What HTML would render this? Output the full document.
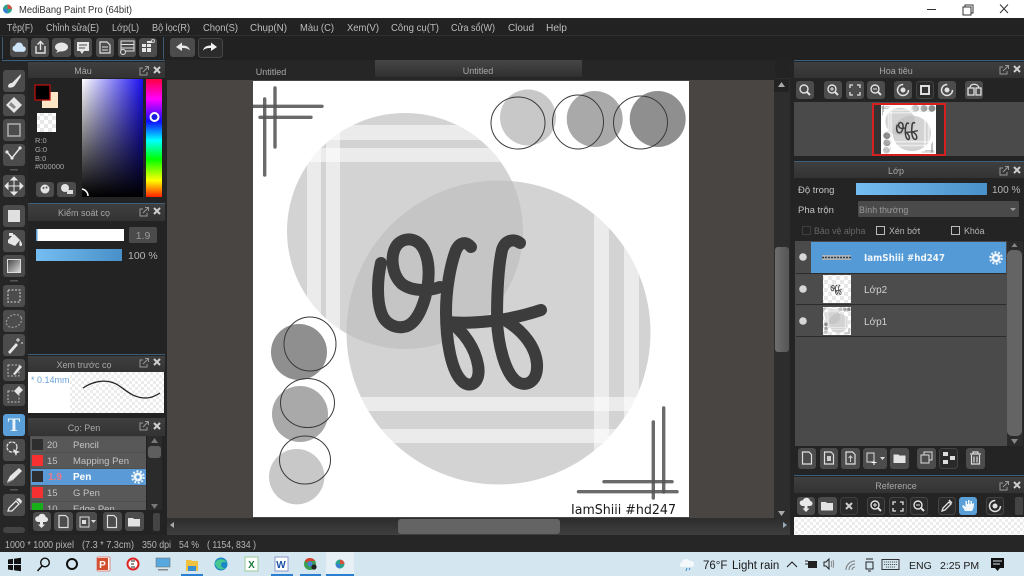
<!DOCTYPE html>
<html><head><meta charset="utf-8"><title>MediBang Paint Pro</title>
<style>
html,body{margin:0;padding:0;width:1024px;height:576px;overflow:hidden;background:#222}
svg{display:block}
text{font-family:"Liberation Sans","DejaVu Sans",sans-serif}
.m{font-size:10.5px;fill:#bdbdbd}
.t{font-size:9px;fill:#a8a8a8;text-anchor:middle}
.l{font-size:9.5px;fill:#c4c4c4}
.b{fill:#4c4c4c}
</style></head><body>
<svg width="1024" height="576" viewBox="0 0 1024 576" xmlns="http://www.w3.org/2000/svg">
<defs>
<linearGradient id="tab" x1="0" y1="0" x2="0" y2="1"><stop offset="0" stop-color="#464646"/><stop offset="1" stop-color="#303030"/></linearGradient>
<linearGradient id="ttl" x1="0" y1="0" x2="0" y2="1"><stop offset="0" stop-color="#3f3f3f"/><stop offset="1" stop-color="#333"/></linearGradient>
<linearGradient id="blue" x1="0" y1="0" x2="1" y2="0"><stop offset="0" stop-color="#74bdf2"/><stop offset="1" stop-color="#4a90c8"/></linearGradient>
<linearGradient id="hue" x1="0" y1="0" x2="0" y2="1"><stop offset="0" stop-color="#ff0040"/><stop offset=".17" stop-color="#ff00ff"/><stop offset=".36" stop-color="#1010ff"/><stop offset=".52" stop-color="#00ffff"/><stop offset=".68" stop-color="#00ff00"/><stop offset=".86" stop-color="#ffff00"/><stop offset="1" stop-color="#ff2000"/></linearGradient>
<linearGradient id="sv1" x1="0" y1="0" x2="1" y2="0"><stop offset="0" stop-color="#fff"/><stop offset="1" stop-color="#1a10f0"/></linearGradient>
<linearGradient id="sv2" x1="0" y1="0" x2="0" y2="1"><stop offset="0" stop-color="#000" stop-opacity="0"/><stop offset="1" stop-color="#000"/></linearGradient>
<linearGradient id="sbv" x1="0" y1="0" x2="1" y2="0"><stop offset="0" stop-color="#6e6e6e"/><stop offset="1" stop-color="#555"/></linearGradient>
<linearGradient id="track" x1="0" y1="0" x2="0" y2="1"><stop offset="0" stop-color="#2c2c2c"/><stop offset="1" stop-color="#403f3f"/></linearGradient>
<linearGradient id="grad" x1="0" y1="0" x2="1" y2="1"><stop offset="0" stop-color="#444"/><stop offset="1" stop-color="#ddd"/></linearGradient>
<pattern id="chk" width="8" height="8" patternUnits="userSpaceOnUse"><rect width="8" height="8" fill="#fff"/><rect width="4" height="4" fill="#e8e8e8"/><rect x="4" y="4" width="4" height="4" fill="#e8e8e8"/></pattern>
<pattern id="chk2" width="6" height="6" patternUnits="userSpaceOnUse"><rect width="6" height="6" fill="#fff"/><rect width="3" height="3" fill="#ececec"/><rect x="3" y="3" width="3" height="3" fill="#ececec"/></pattern>
<clipPath id="cv"><rect x="253" y="81" width="436" height="436"/></clipPath>
<clipPath id="c1"><circle cx="405" cy="231" r="118"/></clipPath>
<clipPath id="c2"><circle cx="498.5" cy="332.5" r="152"/></clipPath>
<g id="pop"><path d="M3 2H0V9H7V6" fill="none" stroke="#999" stroke-width="1"/><path d="M3 6L8 1M5 0.5H8.5V4" fill="none" stroke="#999"/></g>
<g id="x"><path d="M0 0L6 6M6 0L0 6" stroke="#cfcfcf" stroke-width="2"/></g>
<g id="gear"><circle r="4.5" fill="#eef5fb"/><circle r="5.8" fill="none" stroke="#eef5fb" stroke-width="2" stroke-dasharray="2 1.65"/><circle r="1.7" fill="#5a9dd6"/></g>
<g id="zi"><circle cx="-1" cy="-1" r="4" fill="none" stroke="#e2e2e2" stroke-width="1.4"/><path d="M2 2L5 5" stroke="#e2e2e2" stroke-width="2"/></g>
<g id="zp"><use href="#zi"/><path d="M-3-1H1M-1-3V1" stroke="#e2e2e2"/></g>
<g id="zm"><use href="#zi"/><path d="M-3-1H1" stroke="#e2e2e2"/></g>
<g id="page"><path d="M-4.5-6H2L4.500-3.500V6H-4.500Z" fill="none" stroke="#dedede" stroke-width="1.2"/></g>
<g id="fold"><path d="M-6-4H-1L0-3H6V4.500H-6Z" fill="#e2e2e2"/></g>
<g id="cloud"><g fill="#e8e8e8"><circle cx="-3.500" cy="-1" r="2.800"/><circle cx="0.500" cy="-2.500" r="3.800"/><circle cx="4" cy="-0.500" r="2.500"/><rect x="-4" y="-1" width="8" height="3"/><path d="M-1.500 2H1.500V4.500H3.500L0 8L-3.500 4.500H-1.500Z"/></g></g>
<g id="rot"><circle r="5.500" fill="none" stroke="#e2e2e2" stroke-width="1.500" stroke-dasharray="26 9"/><circle r="2.500" fill="#e2e2e2"/></g>
<g id="letters" fill="none" stroke="#3c3c3c" stroke-width="12" stroke-linecap="round" stroke-linejoin="round">
  <path d="M381 263C377 280 377 300 381 312C385 325 396 328 403 327C414 326 421 312 425 298C430 280 430 262 424 250C418 238 405 236 397 245C390 254 391 274 402 284C413 292 430 291 440 287"/>
  <path d="M471 247C466 241 460 242 456 250C450 266 446 290 446 312C446 340 451 372 463 382C472 389 481 381 478 365C475 348 464 332 450 322"/>
  <path d="M520 243C514 238 505 240 502 250C498 268 497 296 497 320C498 345 505 372 516 381C526 388 538 382 537 364C536 348 524 332 508 322"/>
  <path d="M447 322C470 324 505 322 541 310"/>
</g>
<g id="art">
 <circle cx="405" cy="231" r="118" fill="#d3d3d3"/>
 <g clip-path="url(#c1)" fill="#fff" fill-opacity=".55">
  <rect x="280" y="125" width="250" height="15"/><rect x="280" y="148" width="250" height="14"/>
  <rect x="307" y="100" width="14" height="260"/><rect x="326" y="100" width="14" height="260"/>
 </g>
 <circle cx="498.500" cy="332.500" r="152" fill="#d3d3d3"/>
 <g clip-path="url(#c2)">
  <circle cx="405" cy="231" r="118" fill="#c5c5c5"/>
  <g fill="#fff" fill-opacity=".55">
   <rect x="340" y="397" width="320" height="14"/><rect x="340" y="429" width="320" height="14"/>
   <rect x="594" y="170" width="15" height="320"/><rect x="624" y="170" width="15" height="320"/>
  </g>
 </g>
 <circle cx="528" cy="117.500" r="28" fill="#c8c8c8"/>
 <circle cx="594.700" cy="119" r="28" fill="#a9a9a9"/>
 <circle cx="657.700" cy="119" r="28" fill="#8f8f8f"/>
 <circle cx="299" cy="352" r="28" fill="#8f8f8f"/>
 <circle cx="300" cy="414" r="28" fill="#a9a9a9"/>
 <circle cx="296.700" cy="476.700" r="27.700" fill="#c8c8c8"/>
 <g fill="none" stroke="#3a3a3a" stroke-width="1">
  <ellipse cx="518" cy="123" rx="27" ry="26"/><ellipse cx="578" cy="122" rx="25.500" ry="27"/><ellipse cx="640.500" cy="122.500" rx="27" ry="26.500"/>
  <ellipse cx="310" cy="344" rx="26" ry="27"/><ellipse cx="307.500" cy="403" rx="27" ry="24.500"/><ellipse cx="305" cy="460" rx="25.500" ry="24"/>
 </g>
 <g stroke="#555" stroke-opacity=".88" stroke-width="3.400" stroke-linecap="round" fill="none">
  <path d="M250 106.300H322"/><path d="M260 117.300H311"/><path d="M275 88V147"/><path d="M264.700 99V175"/>
  <path d="M663.700 408V492"/><path d="M653.300 422V498"/><path d="M604 481.700H672"/><path d="M578.500 491.700H677"/>
 </g>
</g>
</defs>

<rect width="1024" height="576" fill="#232323"/>
<!-- title bar -->
<rect width="1024" height="18" fill="#fff"/>
<circle cx="7.500" cy="9" r="4.500" fill="#2aa589"/><path d="M7.500 4.500A4.500 4.500 0 0 1 12 9H7.500Z" fill="#d9503f"/><path d="M3 9A4.500 4.500 0 0 0 7.500 13.500V9Z" fill="#3a7bd5"/>
<text x="19" y="13" textLength="113" lengthAdjust="spacingAndGlyphs" style="font-size:10.500px;fill:#333">MediBang Paint Pro (64bit)</text>
<path d="M927 9.500H936" stroke="#333"/>
<path d="M963 7h8v8h-8zM965 7V5h8v8h-2" fill="none" stroke="#333"/>
<path d="M1000 4.500L1008 13M1008 4.500L1000 13" stroke="#333" stroke-width="1"/>

<!-- menu -->
<rect y="18" width="1024" height="18" fill="#222"/>
<rect y="35" width="1024" height="1" fill="#2e2e2e"/>
<text class="m" x="7" y="31" textLength="26" lengthAdjust="spacingAndGlyphs">Tệp(F)</text>
<text class="m" x="46" y="31" textLength="53" lengthAdjust="spacingAndGlyphs">Chỉnh sửa(E)</text>
<text class="m" x="112" y="31" textLength="27" lengthAdjust="spacingAndGlyphs">Lớp(L)</text>
<text class="m" x="152" y="31" textLength="38" lengthAdjust="spacingAndGlyphs">Bộ lọc(R)</text>
<text class="m" x="203" y="31" textLength="35" lengthAdjust="spacingAndGlyphs">Chọn(S)</text>
<text class="m" x="250" y="31" textLength="37" lengthAdjust="spacingAndGlyphs">Chụp(N)</text>
<text class="m" x="300" y="31" textLength="34" lengthAdjust="spacingAndGlyphs">Màu (C)</text>
<text class="m" x="347" y="31" textLength="32" lengthAdjust="spacingAndGlyphs">Xem(V)</text>
<text class="m" x="391" y="31" textLength="48" lengthAdjust="spacingAndGlyphs">Công cụ(T)</text>
<text class="m" x="451" y="31" textLength="44" lengthAdjust="spacingAndGlyphs">Cửa sổ(W)</text>
<text class="m" x="508" y="31" textLength="26" lengthAdjust="spacingAndGlyphs">Cloud</text>
<text class="m" x="546" y="31" textLength="21" lengthAdjust="spacingAndGlyphs">Help</text>

<!-- top toolbar -->
<rect y="36" width="1024" height="24" fill="#212121"/>
<rect x="2" y="37" width="1" height="22" fill="#3d5a72"/><rect x="163" y="37" width="1" height="22" fill="#3d5a72"/>
<rect x="10" y="38" width="18" height="19" rx="3" fill="#4c4c4c"/>
<g fill="#cfe6fa"><circle cx="15.500" cy="48.500" r="3"/><circle cx="19" cy="46.500" r="4"/><circle cx="23" cy="49" r="2.800"/><rect x="15" y="48" width="8" height="3.800"/></g>
<rect x="31" y="38" width="18" height="19" rx="3" class="b"/><path d="M36 46v7h9v-7M40.500 50V42M37.500 44.500L40.500 41.500L43.500 44.500" fill="none" stroke="#e2e2e2" stroke-width="1.400"/>
<rect x="52" y="38" width="19" height="19" rx="3" class="b"/><ellipse cx="61.500" cy="47" rx="6.500" ry="4.500" fill="#e6e6e6"/><path d="M58 50l-2 3 5-2z" fill="#e6e6e6"/>
<rect x="74" y="38" width="18" height="19" rx="3" class="b"/><path d="M77 42h12v9h-5l-2 3-2-3h-3z" fill="#e6e6e6"/><path d="M79 45h8M79 48h6" stroke="#4c4c4c"/>
<rect x="96" y="38" width="18" height="19" rx="3" class="b"/><path d="M100 42h7l3 3v8h-10z" fill="none" stroke="#e2e2e2" stroke-width="1.200"/><path d="M102 47h6M102 50h6" stroke="#e2e2e2"/>
<rect x="118" y="38" width="18" height="19" rx="3" class="b"/><path d="M121 41h13v10h-13zM121 44.500h13M121 48h13" fill="none" stroke="#e2e2e2"/><circle cx="123" cy="52" r="2.500" fill="#4c4c4c" stroke="#e2e2e2"/>
<rect x="139" y="38" width="18" height="19" rx="3" class="b"/><path d="M142 44h4v3h-4zM147 44h4v3h-4zM142 48h4v4h-4zM147 48h4v4h-4z" fill="#e6e6e6"/><rect x="147" y="41" width="5" height="2" fill="#e6e6e6"/><circle cx="153" cy="41" r="1.500" fill="none" stroke="#ccc"/>
<rect x="170" y="38" width="25" height="19" rx="3" class="b"/><path d="M176 47l6-4.500v3c4 0 7 1 8 5-2-2-4-2.500-8-2.500v3z" fill="#e8e8e8"/>
<rect x="198.500" y="38.500" width="24" height="19" rx="3" fill="#2b2b2b" stroke="#464646"/><path d="M217 47l-6-4.500v3c-4 0-7 1-8 5 2-2 4-2.500 8-2.500v3z" fill="#f0f0f0"/>

<!-- tabs -->
<rect x="166" y="60" width="609" height="20" fill="#262626"/>
<rect x="375" y="60" width="207" height="17" fill="url(#tab)"/>
<text class="t" x="271" y="75">Untitled</text>
<text class="t" x="478" y="74">Untitled</text>

<!-- canvas -->
<rect x="167" y="80" width="607" height="438" fill="#484543"/>
<rect x="253" y="81" width="436" height="436" fill="#fff"/>
<g clip-path="url(#cv)">
 <use href="#art"/>
 <use href="#letters"/>
 <text x="571" y="514" style="font-family:'DejaVu Sans',sans-serif;font-size:13.500px;fill:#1a1a1a" textLength="105" lengthAdjust="spacingAndGlyphs">IamShiii #hd247</text>
</g>

<!-- canvas scrollbars -->
<rect x="774" y="78" width="16" height="441" fill="#2e2d2d"/>
<rect x="775" y="247" width="14" height="105" rx="3" fill="url(#sbv)"/>
<rect x="774" y="79" width="15" height="13" fill="#232323"/><path d="M781.500 82l3.500 5h-7z" fill="#aaa"/>
<path d="M778 511h7l-3.500 5z" fill="#aaa"/>
<rect x="167" y="518" width="623" height="17" fill="url(#track)"/>
<rect x="398" y="519" width="162" height="15" rx="3" fill="#646464"/>
<path d="M174 522v6l-4-3z" fill="#aaa"/><path d="M783 522v6l4-3z" fill="#9ab"/>

<!-- left toolbar -->
<rect x="0" y="60" width="28" height="475" fill="#262626"/>
<g class="b">
<rect x="3" y="70" width="22" height="22" rx="3"/><rect x="3" y="94" width="22" height="22" rx="3"/><rect x="3" y="119" width="22" height="22" rx="3"/><rect x="3" y="144" width="22" height="22" rx="3"/><rect x="3" y="175" width="22" height="22" rx="3"/><rect x="3" y="205" width="22" height="22" rx="3"/><rect x="3" y="230" width="22" height="22" rx="3"/><rect x="3" y="255" width="22" height="22" rx="3"/><rect x="3" y="285" width="22" height="22" rx="3"/><rect x="3" y="310" width="22" height="22" rx="3"/><rect x="3" y="334" width="22" height="22" rx="3"/><rect x="3" y="359" width="22" height="22" rx="3"/><rect x="3" y="384" width="22" height="22" rx="3"/><rect x="3" y="439" width="22" height="22" rx="3"/><rect x="3" y="464" width="22" height="22" rx="3"/><rect x="3" y="494" width="22" height="22" rx="3"/>
</g>
<rect x="10" y="169" width="8" height="1.500" fill="#555"/><rect x="10" y="280" width="8" height="1.500" fill="#555"/><rect x="10" y="489" width="8" height="1.500" fill="#555"/>
<rect x="3" y="527" width="22" height="6" rx="3" fill="#444"/>
<path d="M8 87c0-3 2-4 4-4l9-9-0.500 3-6 9c-2 2-5 2-6.500 1z" fill="#e6e6e6"/>
<path d="M6 105l8-8 8 8-8 8z" fill="#e6e6e6"/><path d="M11 102l5 5-2 2-5-4z" fill="#888"/>
<rect x="8" y="124" width="12" height="12" fill="none" stroke="#aaa" stroke-width="1.600"/>
<path d="M7 152l5 6 8-10" fill="none" stroke="#e6e6e6" stroke-width="1.500"/><circle cx="7" cy="152" r="1.600" fill="#e6e6e6"/><circle cx="12" cy="158" r="1.600" fill="#e6e6e6"/><circle cx="20" cy="148" r="1.600" fill="#e6e6e6"/>
<path d="M14 178v16M6 186h16M14 177l-3 3h6zM14 195l-3-3h6zM5 186l3-3v6zM23 186l-3-3v6z" stroke="#e6e6e6" fill="#e6e6e6"/>
<rect x="8" y="210" width="12" height="12" fill="#e0e0e0"/>
<path d="M8 240l6-6 6 6-5 6-7-3z" fill="#e6e6e6"/><path d="M20 240c2 3 3 5 1 6s-2-3-1-6zM9 233h4v3H9z" fill="#e6e6e6"/>
<rect x="7.500" y="259.500" width="13" height="13" fill="url(#grad)" stroke="#ddd"/>
<rect x="8" y="290" width="12" height="12" fill="none" stroke="#bbb" stroke-dasharray="2 1.500" stroke-width="1.300"/>
<ellipse cx="14" cy="321" rx="8" ry="6" transform="rotate(-25 14 321)" fill="none" stroke="#999" stroke-dasharray="2 1.500" stroke-width="1.200"/>
<path d="M8 352l8-9 2 2-8 9z" fill="#e6e6e6"/><path d="M18 338v4M16 340h4M21 343h2" stroke="#e6e6e6"/>
<rect x="8" y="365" width="11" height="11" fill="none" stroke="#bbb" stroke-dasharray="2 1.500"/><path d="M13 374l7-9 2 2-7 8z" fill="#e6e6e6"/>
<rect x="8" y="391" width="11" height="11" fill="none" stroke="#bbb" stroke-dasharray="2 1.500"/><path d="M14 391l5-5 4 4-5 5z" fill="#e6e6e6"/>
<rect x="3" y="414" width="22" height="22" rx="3" fill="#5a9fd8"/>
<text x="14" y="431" text-anchor="middle" style="font-family:'Liberation Serif',serif;font-size:19px;font-weight:bold;fill:#e8f3fb">T</text>
<circle cx="12" cy="447" r="5" fill="none" stroke="#ddd" stroke-width="1.400" stroke-dasharray="3 1"/><path d="M13 449l7 3-3 1-1 3z" fill="#e6e6e6"/>
<path d="M7 482l3-6 9-8 3 3-9 9z" fill="#e6e6e6"/><path d="M7 483l6-3" stroke="#888"/>
<path d="M8 511l1-3 7-7 3 3-7 7z" fill="none" stroke="#e6e6e6" stroke-width="1.300"/><path d="M16 499l5 5 1-3-3-3z" fill="#e6e6e6"/>

<!-- left panels -->
<rect x="28" y="60" width="138" height="475" fill="#232323"/>
<rect x="2" y="60" width="163" height="1" fill="#3c5f7c"/>
<rect x="28" y="62" width="137" height="16" fill="url(#ttl)"/>
<text class="t" x="83" y="74">Màu</text>
<use href="#pop" x="140" y="66"/><use href="#x" x="154" y="67"/>
<rect x="42" y="92" width="16" height="16" fill="#ffe6c4"/>
<rect x="35" y="85" width="15" height="15" fill="#000" stroke="#b81010" stroke-width="1.300"/>
<rect x="37" y="113" width="19" height="19" fill="url(#chk)"/>
<text x="35" y="143" style="font-size:7.500px;fill:#a8a8a8">R:0</text><text x="35" y="152" style="font-size:7.500px;fill:#a8a8a8">G:0</text><text x="35" y="161" style="font-size:7.500px;fill:#a8a8a8">B:0</text><text x="35" y="169" style="font-size:7.500px;fill:#a8a8a8">#000000</text>
<rect x="36" y="182" width="18" height="15" rx="3" class="b"/><circle cx="45" cy="189" r="4.500" fill="#e2e2e2"/><circle cx="43.500" cy="188" r="1" fill="#555"/><circle cx="46.500" cy="187.500" r="1" fill="#555"/>
<rect x="57" y="182" width="19" height="15" rx="3" class="b"/><circle cx="65" cy="188" r="4" fill="#e2e2e2"/><rect x="67" y="190" width="6" height="4" fill="#ddd"/>
<rect x="82" y="79" width="61" height="118" fill="url(#sv1)"/><rect x="82" y="79" width="61" height="118" fill="url(#sv2)"/>
<path d="M82 189a7 7 0 0 1 6 7" fill="none" stroke="#fff" stroke-width="1.500"/>
<rect x="146" y="79" width="16" height="118" fill="url(#hue)"/>
<circle cx="154.500" cy="117" r="4" fill="#1a1ae0" stroke="#fff" stroke-width="2"/>

<rect x="28" y="203" width="137" height="1" fill="#3c5f7c"/>
<rect x="28" y="204" width="137" height="17" fill="url(#ttl)"/>
<text class="t" x="84" y="216">Kiểm soát cọ</text>
<use href="#pop" x="140" y="207"/><use href="#x" x="154" y="208"/>
<rect x="36" y="229" width="88" height="12" fill="#fff"/><rect x="36" y="229" width="1.500" height="12" fill="#5a9fd8"/>
<rect x="129" y="227" width="28" height="16" rx="2" fill="#4a4a4a"/>
<text x="143" y="239" text-anchor="middle" style="font-size:10.500px;fill:#999">1.9</text>
<rect x="36" y="249" width="86" height="12" fill="url(#blue)"/>
<text x="128" y="259" style="font-size:10.500px;fill:#b5b5b5">100 %</text>

<rect x="28" y="354" width="137" height="1" fill="#3c5f7c"/>
<rect x="28" y="356" width="137" height="16" fill="url(#ttl)"/>
<text class="t" x="84" y="368">Xem trước cọ</text>
<use href="#pop" x="140" y="358"/><use href="#x" x="154" y="359"/>
<rect x="28" y="372" width="136" height="41" fill="url(#chk2)"/>
<rect x="28" y="372" width="42" height="41" fill="#fff"/>
<text x="31" y="383" style="font-size:9px;fill:#6aa2d6">* 0.14mm</text>
<path d="M83 388C95 380 108 379 118 385C128 392 134 398 146 398C152 398 157 395 160 393" fill="none" stroke="#222" stroke-width="1.300"/>

<rect x="28" y="418" width="137" height="18" fill="url(#ttl)"/>
<text class="t" x="84" y="431">Cọ: Pen</text>
<use href="#pop" x="140" y="421"/><use href="#x" x="154" y="423"/>
<rect x="30" y="436" width="116" height="74" fill="#4f4f4f"/>
<rect x="31" y="437" width="115" height="15" fill="#585858"/><rect x="31" y="453" width="115" height="15" fill="#585858"/>
<rect x="31" y="469" width="115" height="16" fill="#5a9ad6"/>
<rect x="31" y="486" width="115" height="15" fill="#585858"/><rect x="31" y="502" width="115" height="8" fill="#585858"/>
<rect x="32" y="439" width="11" height="11" fill="#2e2e2e"/><rect x="32" y="455" width="11" height="11" fill="#f63030"/><rect x="32" y="471" width="11" height="11" fill="#2e2e2e"/><rect x="32" y="487" width="11" height="11" fill="#f63030"/><rect x="32" y="503" width="11" height="7" fill="#18b018"/>
<text class="l" x="47" y="448">20</text><text class="l" x="73" y="448">Pencil</text>
<text class="l" x="47" y="464">15</text><text class="l" x="73" y="464">Mapping Pen</text>
<text x="48" y="480" style="font-size:10px;font-weight:bold;fill:#e87a8c">1.9</text><text x="73" y="480" style="font-size:10px;font-weight:bold;fill:#fff">Pen</text>
<use href="#gear" x="138" y="477"/>
<text class="l" x="47" y="496">15</text><text class="l" x="73" y="496">G Pen</text>
<clipPath id="cl"><rect x="30" y="436" width="116" height="74"/></clipPath>
<g clip-path="url(#cl)"><text class="l" x="47" y="512">10</text><text class="l" x="73" y="512">Edge Pen</text></g>
<rect x="147" y="436" width="15" height="74" fill="#2b2b2b"/><rect x="148" y="446" width="13" height="12" rx="3" fill="#5e5e5e"/>
<path d="M154.500 438l3.500 5h-7zM151 504h7l-3.500 5z" fill="#777"/>
<rect x="33" y="512" width="18" height="19" rx="3" class="b"/><use href="#cloud" x="41.500" y="520"/>
<rect x="54" y="512" width="19" height="19" rx="3" class="b"/><use href="#page" x="63.500" y="521.500"/>
<rect x="76" y="512" width="21" height="19" rx="3" class="b"/><rect x="80" y="517" width="9" height="10" fill="none" stroke="#ddd"/><rect x="82" y="520" width="4" height="4" fill="#ddd"/><path d="M91 520h5l-2.500 3z" fill="#ddd"/>
<rect x="103" y="512" width="19" height="19" rx="3" class="b"/><use href="#page" x="112" y="521.500"/>
<rect x="125" y="512" width="19" height="19" rx="3" class="b"/><use href="#fold" x="134" y="522"/>
<rect x="153" y="513" width="7" height="18" rx="2" fill="#444"/>

<!-- right panels -->
<rect x="790" y="60" width="234" height="475" fill="#242424"/>
<rect x="794" y="60" width="230" height="1" fill="#3c5f7c"/>
<rect x="794" y="62" width="230" height="16" fill="url(#ttl)"/>
<text class="t" x="896" y="74">Hoa tiêu</text>
<use href="#pop" x="1000" y="65"/><use href="#x" x="1014" y="66"/>
<rect x="796" y="81" width="18" height="18" rx="3" class="b"/><use href="#zi" x="805" y="90"/>
<rect x="824" y="81" width="18" height="18" rx="3" class="b"/><use href="#zp" x="833" y="90"/>
<rect x="846" y="81" width="18" height="18" rx="3" class="b"/><path d="M850 88v-3h3M857 85h3v3M860 92v3h-3M853 95h-3v-3" fill="none" stroke="#e2e2e2" stroke-width="1.300"/>
<rect x="867" y="81" width="18" height="18" rx="3" class="b"/><use href="#zm" x="876" y="90"/>
<rect x="894" y="81" width="18" height="18" rx="3" class="b"/><use href="#rot" x="903" y="90"/>
<rect x="916.500" y="81.500" width="17" height="17" rx="3" fill="#2a2a2a" stroke="#444"/><path d="M920 85h10v10h-10z" fill="#ddd"/><rect x="922" y="87" width="6" height="6" fill="#333"/>
<rect x="938" y="81" width="18" height="18" rx="3" class="b"/><use href="#rot" x="947" y="90"/>
<rect x="965" y="81" width="18" height="18" rx="3" class="b"/><path d="M968 88h6v7h-6zM976 88h5v7h-5zM970 88c0-5 8-5 9 0" fill="none" stroke="#e2e2e2" stroke-width="1.300"/>
<rect x="794" y="102" width="230" height="54" fill="#4a4a4a"/>
<rect x="874" y="104" width="71" height="51" fill="#333"/>
<rect x="881" y="104" width="55" height="51" fill="#fff"/>
<g transform="translate(849.100 94.500) scale(.126 .117)"><use href="#art"/><use href="#letters"/></g>
<rect x="873" y="104" width="72" height="51" fill="none" stroke="#d42020" stroke-width="2"/>

<rect x="794" y="161" width="230" height="1" fill="#3c5f7c"/>
<rect x="794" y="162" width="230" height="16" fill="url(#ttl)"/>
<text class="t" x="896" y="174">Lớp</text>
<use href="#pop" x="1000" y="166"/><use href="#x" x="1014" y="167"/>
<text class="l" x="798" y="193">Độ trong</text>
<rect x="856" y="183" width="131" height="12" fill="url(#blue)"/>
<text x="992" y="193" style="font-size:10px;fill:#b5b5b5">100 %</text>
<text class="l" x="798" y="213">Pha trộn</text>
<rect x="858" y="201" width="161" height="16" rx="1" fill="#4a4a4a"/>
<text x="859" y="213" style="font-size:8.800px;fill:#9a9a9a">Bình thường</text>
<path d="M1010 208h6l-3 3z" fill="#999"/>
<rect x="802.500" y="226.500" width="8" height="8" fill="none" stroke="#3e3e3e"/>
<text x="814" y="234" style="font-size:8.800px;fill:#666">Bảo vệ alpha</text>
<rect x="876.500" y="226.500" width="8" height="8" fill="none" stroke="#bbb"/>
<text x="889" y="234" style="font-size:8.800px;fill:#b5b5b5">Xén bớt</text>
<rect x="951.500" y="226.500" width="8" height="8" fill="none" stroke="#bbb"/>
<text x="964" y="234" style="font-size:8.800px;fill:#b5b5b5">Khóa</text>

<rect x="795" y="241" width="212" height="205" fill="#4a4a4a"/>
<rect x="796" y="242" width="15" height="31" fill="#4a4a4a"/>
<rect x="811" y="242" width="195" height="31" fill="#539ad6"/>
<rect x="796" y="275" width="210" height="29" fill="#4c4c4c"/>
<rect x="796" y="306" width="210" height="30" fill="#4c4c4c"/>
<path d="M796 273.500H1006M796 304.500H1006M796 336.500H1006" stroke="#2c2c2c" stroke-width="1"/>
<circle cx="803" cy="257" r="3.800" fill="#d8d8d8"/><circle cx="803" cy="289" r="3.800" fill="#d8d8d8"/><circle cx="803" cy="321" r="3.800" fill="#d8d8d8"/>
<rect x="822" y="255" width="29" height="5" fill="#a9b4bd"/><path d="M822 257.500h29" stroke="#3a3a3a" stroke-width="1.400" stroke-dasharray="2 1"/>
<rect x="823" y="275" width="28" height="28" fill="url(#chk)"/>
<g transform="translate(806.800 269.800) scale(.064)"><use href="#letters"/></g>
<rect x="823" y="307" width="28" height="28" fill="url(#chk)"/>
<g transform="translate(806.800 301.800) scale(.064)"><use href="#art"/></g>
<text x="864" y="261" style="font-family:'DejaVu Sans',sans-serif;font-size:10px;font-weight:bold;fill:#eef5fb" textLength="81" lengthAdjust="spacingAndGlyphs">IamShiii #hd247</text>
<text x="864" y="293" style="font-size:10px;fill:#d0d0d0">Lớp2</text>
<text x="864" y="325" style="font-size:10px;fill:#d0d0d0">Lớp1</text>
<use href="#gear" x="996" y="258"/>
<rect x="1007" y="241" width="16" height="205" fill="#2b2b2b"/>
<rect x="1007" y="250" width="15" height="186" rx="5" fill="#646464"/>
<path d="M1014.500 243l3 4h-6zM1011 439h7l-3.500 5z" fill="#888"/>

<rect x="798" y="448" width="18" height="21" rx="3" class="b"/><use href="#page" x="807" y="458"/>
<rect x="820" y="448" width="18" height="21" rx="3" class="b"/><use href="#page" x="829" y="458"/><rect x="827" y="456" width="4" height="5" fill="#ccc"/>
<rect x="841" y="448" width="19" height="21" rx="3" class="b"/><use href="#page" x="850.500" y="458"/><path d="M850.500 462v-6M848.500 458l2-2 2 2" fill="none" stroke="#ccc"/>
<rect x="863" y="448" width="24" height="21" rx="3" class="b"/><path d="M867 453h7v9h-7z" fill="none" stroke="#ddd"/><path d="M874 460v5M871.500 462.500h5" stroke="#fff"/><path d="M880 457h5l-2.500 3z" fill="#ddd"/>
<rect x="890" y="448" width="19" height="21" rx="3" class="b"/><use href="#fold" x="899.500" y="458.500"/>
<rect x="917" y="448" width="19" height="21" rx="3" class="b"/><path d="M921 455h8v8h-8zM924 455v-3h8v8h-3" fill="none" stroke="#ddd"/>
<rect x="939.500" y="448.500" width="18" height="20" rx="3" fill="#2a2a2a" stroke="#444"/><path d="M943 452h5v4h-5zM943 460h5v4h-5zM950 456h5v4h-5z" fill="#ddd"/>
<rect x="966" y="448" width="19" height="21" rx="3" class="b"/><path d="M970 454h11M971.500 455v9h8v-9M974 456.500v6M977 456.500v6M973 454v-2h5v2" fill="none" stroke="#ddd" stroke-width="1.200"/>

<rect x="794" y="475" width="230" height="1" fill="#3c5f7c"/>
<rect x="794" y="477" width="230" height="16" fill="url(#ttl)"/>
<text class="t" x="896" y="489">Reference</text>
<use href="#pop" x="1000" y="481"/><use href="#x" x="1014" y="482"/>
<rect x="797" y="497" width="18" height="18" rx="3" class="b"/><use href="#cloud" x="806" y="504"/>
<rect x="818" y="497" width="19" height="18" rx="3" class="b"/><use href="#fold" x="827" y="506"/>
<rect x="840.500" y="497.500" width="17" height="17" rx="3" fill="#2a2a2a" stroke="#3e3e3e"/><use href="#x" x="846" y="503"/>
<rect x="867.500" y="497.500" width="17" height="17" rx="3" fill="#2a2a2a" stroke="#444"/><use href="#zp" x="876" y="506"/>
<rect x="889.500" y="497.500" width="17" height="17" rx="3" fill="#2a2a2a" stroke="#444"/><path d="M893 505v-3h3M900 502h3v3M903 508v3h-3M896 511h-3v-3" fill="none" stroke="#e2e2e2" stroke-width="1.300"/>
<rect x="910.500" y="497.500" width="17" height="17" rx="3" fill="#2a2a2a" stroke="#444"/><use href="#zm" x="919" y="506"/>
<rect x="938.500" y="497.500" width="17" height="17" rx="3" fill="#2a2a2a" stroke="#444"/><path d="M942 511l1-3 6-6 2 2-6 6zM949 500l3 3" fill="none" stroke="#e2e2e2" stroke-width="1.300"/>
<rect x="959" y="497" width="18" height="18" rx="3" fill="#5a9fd8"/><path d="M962 506l3 5h7c2-3 2-6 2-8l-2 1v-3h-1.500v3h-1v-4h-1.500v4h-1v-3h-1.500v6l-2-2z" fill="#eef5fb"/>
<rect x="986.500" y="497.500" width="17" height="17" rx="3" fill="#2a2a2a" stroke="#444"/><use href="#rot" x="995" y="506"/>
<rect x="1015" y="497" width="8" height="18" rx="2" fill="#444"/>
<rect x="794" y="517" width="230" height="18" fill="url(#chk2)"/>

<!-- status -->
<rect y="535" width="1024" height="17" fill="#262626"/>
<text x="5" y="548" textLength="69" lengthAdjust="spacingAndGlyphs" style="font-size:10px;fill:#b5b5b5">1000 * 1000 pixel</text>
<text x="82" y="548" textLength="52" lengthAdjust="spacingAndGlyphs" style="font-size:10px;fill:#b5b5b5">(7.3 * 7.3cm)</text>
<text x="142" y="548" textLength="29" lengthAdjust="spacingAndGlyphs" style="font-size:10px;fill:#b5b5b5">350 dpi</text>
<text x="179" y="548" textLength="20" lengthAdjust="spacingAndGlyphs" style="font-size:10px;fill:#b5b5b5">54 %</text>
<text x="207" y="548" textLength="49" lengthAdjust="spacingAndGlyphs" style="font-size:10px;fill:#b5b5b5">( 1154, 834 )</text>

<!-- taskbar -->
<rect y="552" width="1024" height="24" fill="#d4e6ef"/>
<path d="M8 559.500l5-.7v5.200H8zM14 558.700l7-1v6.300h-7zM8 565h5v5.200l-5-.7zM14 565h7v6.300l-7-1z" fill="#111"/>
<circle cx="45" cy="562.500" r="4.300" fill="none" stroke="#111" stroke-width="1.400"/><path d="M42 566L37.500 571" stroke="#111" stroke-width="1.500"/>
<circle cx="72" cy="564" r="5" fill="none" stroke="#111" stroke-width="2"/>
<rect x="97" y="557" width="13" height="14" rx="1" fill="#fff" stroke="#d88"/><rect x="97" y="558" width="11" height="12" fill="#d2502e"/><text x="102.500" y="568" text-anchor="middle" style="font-size:10px;font-weight:bold;fill:#fff">P</text>
<circle cx="133" cy="564" r="5.500" fill="#fff" stroke="#d22" stroke-width="2"/><path d="M131 561h4M131 564h3M131 567h4" stroke="#222"/>
<rect x="156" y="558" width="14" height="9" fill="#58a8e0" stroke="#666" stroke-width=".5"/><rect x="158" y="569" width="10" height="1.500" fill="#888"/>
<path d="M186 560h5l1 1h6v10h-12z" fill="#f0c040"/><rect x="188" y="566" width="8" height="5" fill="#3a8fd0"/><rect x="181" y="574" width="22" height="2" fill="#2a7fd0"/>
<circle cx="221" cy="564" r="6.500" fill="#1a88c8"/><path d="M215 563c2-5 10-5 12 0-3-2-6-1-6 2 0 2 3 4 5 3-4 3-10 1-11-5z" fill="#48c890"/>
<rect x="245" y="557" width="13" height="14" fill="#fff" stroke="#9c9"/><text x="251.500" y="568" text-anchor="middle" style="font-size:10px;font-weight:bold;fill:#1a7a3a">X</text>
<rect x="275" y="557" width="13" height="14" fill="#fff" stroke="#89c"/><text x="281" y="568" text-anchor="middle" style="font-size:10px;font-weight:bold;fill:#1a50a8">W</text><rect x="271" y="574" width="22" height="2" fill="#2a7fd0"/>
<circle cx="310" cy="564" r="6" fill="#3aa050"/><path d="M310 558a6 6 0 0 1 5.200 3H310a3 3 0 0 0-3 2l-2-2.500a6 6 0 0 1 5-2.500z" fill="#d8402e"/><circle cx="310" cy="564" r="2.500" fill="#4a80e0"/><circle cx="314" cy="567" r="2.600" fill="#222"/><rect x="300" y="574" width="21" height="2" fill="#2a7fd0"/>
<rect x="326" y="552" width="28" height="24" fill="#e6f0f5"/>
<circle cx="340" cy="564" r="4.500" fill="#2aa589"/><path d="M340 559.500A4.500 4.500 0 0 1 344.500 564H340Z" fill="#d9503f"/><path d="M335.500 564A4.500 4.500 0 0 0 340 568.500V564Z" fill="#3a7bd5"/>
<rect x="326" y="574" width="28" height="2" fill="#2a7fd0"/>
<path d="M681 567a3 3 0 0 1 1-5a4.500 4.500 0 0 1 8-1a3 3 0 0 1 2 6z" fill="#f4f8fa"/><path d="M687 568l-1 3M690 568l-1 2" stroke="#3a88d0"/>
<text x="703" y="569" style="font-size:11.500px;fill:#1a1a1a">76°F</text>
<text x="732" y="569" style="font-size:11.500px;fill:#1a1a1a">Light rain</text>
<path d="M787 567l5-5 5 5" fill="none" stroke="#222" stroke-width="1.100"/>
<rect x="808" y="561" width="9" height="7" fill="#222"/><path d="M805 561h3M805 564h3" stroke="#222"/>
<path d="M824 562v4h2l3 3v-10l-3 3z" fill="none" stroke="#222"/><path d="M831 561c1 2 1 4 0 6M833 560c1 3 1 5 0 8" stroke="#888" fill="none"/>
<path d="M846 570a9 9 0 0 1 9-9M849 570a6 6 0 0 1 6-6M852 570a3 3 0 0 1 3-3" fill="none" stroke="#777"/>
<rect x="866" y="562" width="7" height="7" fill="none" stroke="#222"/><path d="M866 559h7M868 571h3" stroke="#222"/>
<rect x="882" y="559.500" width="17" height="10" fill="none" stroke="#333"/><path d="M884 562h13M884 564.500h13M886 567h9" stroke="#555" stroke-dasharray="1.200 .8"/>
<text x="909" y="569" style="font-size:10.500px;fill:#1a1a1a">ENG</text>
<text x="940" y="569" style="font-size:10.500px;fill:#1a1a1a">2:25 PM</text>
<path d="M991 558h13v10h-4l-2.500 3-2.500-3h-4z" fill="#111"/><path d="M993 561h9M993 564h7" stroke="#d4e6ef"/>
</svg>
</body></html>
